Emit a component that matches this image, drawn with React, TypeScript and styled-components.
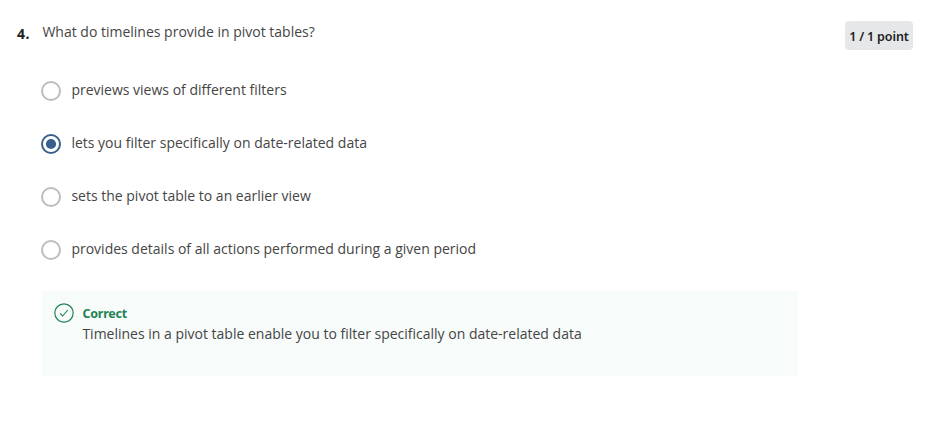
import React from "react";
import styled, { createGlobalStyle } from "styled-components";

const GlobalStyle = createGlobalStyle`
  * { box-sizing: border-box; }
  body { margin: 0; background: #fff; color: #454545; font: 14px/20px "Open Sans", sans-serif; }
`;
const Page = styled.main`
  display: grid;
  grid-template-columns: 25px 756px 1fr;
  padding: 21px 33px 0 17px;
  min-height: 431px;
`;
const QuestionNumber = styled.span`
  font: 700 14px/20px "Noto Sans", sans-serif;
  letter-spacing: 0.5px;
  color: #1f1f1f;
  padding-top: 3px;
`;
const Prompt = styled.h1`
  margin: 0;
  padding-left: 0.4px;
  font-size: 14px;
  font-weight: 400;
  line-height: 22px;
`;
const Points = styled.div`
  justify-self: end;
  width: 68px;
  height: 29px;
  border-radius: 4px;
  background: #e5e7e8;
  color: #1f1f1f;
  font: 600 12.5px/31px "Noto Sans", sans-serif;
  letter-spacing: -0.1px;
  word-spacing: -0.2px;
  text-align: center;
  white-space: nowrap;
`;
const Options = styled.div`
  display: grid;
  gap: 33px;
  margin-top: 38px;
`;
const Option = styled.label`
  display: flex;
  gap: 10.4px;
  height: 20px;
  margin-left: -1px;
`;
const Label = styled.span`
  margin-top: -1px;
`;
const Feedback = styled.section`
  display: flex;
  gap: 8.4px;
  height: 85px;
  margin-top: 31px;
  padding: 12px;
  background: #f7fbfa;
`;
const Title = styled.div`
  color: #1f8354;
  font: 700 12.5px/21px "Noto Sans", sans-serif;
  letter-spacing: -0.2px;
`;
const Radio = ({ checked }: { checked: boolean }) => (
  <svg width="20" height="20" viewBox="0 0 20 20">
    <circle cx="10" cy="10" r="9" fill="#fff" stroke={checked ? "#38608f" : "#bdbdbd"} strokeWidth="2" />
    {checked && <circle cx="10" cy="10" r="5.1" fill="#38608f" />}
  </svg>
);
const options = [
  "previews views of different filters",
  "lets you filter specifically on date-related data",
  "sets the pivot table to an earlier view",
  "provides details of all actions performed during a given period",
];
export default function App() {
  return (
    <>
      <GlobalStyle />
      <Page>
        <QuestionNumber>4.</QuestionNumber>
        <div>
          <Prompt>What do timelines provide in pivot tables?</Prompt>
          <Options>
            {options.map((text, i) => (
              <Option key={text}>
                <Radio checked={i === 1} />
                <Label>{text}</Label>
              </Option>
            ))}
          </Options>
          <Feedback>
            <svg width="20" height="20" viewBox="0 0 20 20" fill="none" stroke="#1f8354">
              <circle cx="10" cy="10" r="9.2" strokeWidth="1.2" />
              <path d="M6 10.4l2.6 2.6L13.8 7" strokeWidth="1.1" />
            </svg>
            <div>
              <Title>Correct</Title>
              <div>Timelines in a pivot table enable you to filter specifically on date-related data</div>
            </div>
          </Feedback>
        </div>
        <Points>1 / 1 point</Points>
      </Page>
    </>
  );
}
